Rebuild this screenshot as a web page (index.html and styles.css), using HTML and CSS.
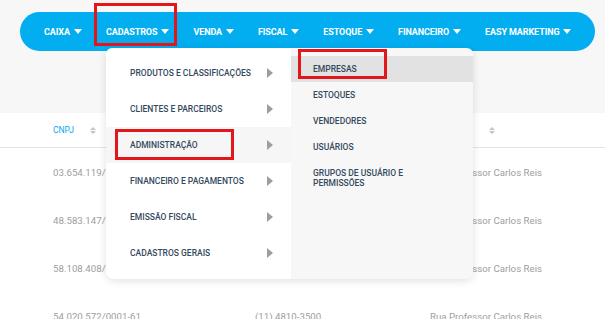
FILE: index.html
```html
<!DOCTYPE html>
<html lang="pt-BR">
<head>
    <meta charset="UTF-8">
    <title>Cadastros</title>
    <link rel="stylesheet" href="styles.css">
</head>
<body>
    <div class="header">
        <nav class="navbar">
            <span class="nav-item">CAIXA <i class="caret"></i></span>
            <span class="nav-item">CADASTROS <i class="caret"></i></span>
            <span class="nav-item">VENDA <i class="caret"></i></span>
            <span class="nav-item">FISCAL <i class="caret"></i></span>
            <span class="nav-item">ESTOQUE <i class="caret"></i></span>
            <span class="nav-item">FINANCEIRO <i class="caret"></i></span>
            <span class="nav-item">EASY MARKETING <i class="caret"></i></span>
        </nav>
    </div>

    <div class="table">
        <div class="row head">
            <span class="th">CNPJ <i class="sort"></i></span>
            <span class="th">TELEFONE <i class="sort"></i></span>
            <span class="th">ENDEREÇO <i class="sort"></i></span>
        </div>
        <div class="row">
            <span>03.654.119/0001-76</span>
            <span>(11) 4810-3500</span>
            <span>Rua Professor Carlos Reis</span>
        </div>
        <div class="row">
            <span>48.583.147/0001-10</span>
            <span>(11) 4810-3500</span>
            <span>Rua Professor Carlos Reis</span>
        </div>
        <div class="row">
            <span>58.108.408/0001-32</span>
            <span>(11) 4810-3500</span>
            <span>Rua Professor Carlos Reis</span>
        </div>
        <div class="row">
            <span>54.020.572/0001-61</span>
            <span>(11) 4810-3500</span>
            <span>Rua Professor Carlos Reis</span>
        </div>
    </div>

    <!-- dropdown of CADASTROS -->
    <div class="dropdown">
        <ul class="menu">
            <li>PRODUTOS E CLASSIFICAÇÕES <i class="arrow"></i></li>
            <li>CLIENTES E PARCEIROS <i class="arrow"></i></li>
            <li class="active">ADMINISTRAÇÃO <i class="arrow"></i></li>
            <li>FINANCEIRO E PAGAMENTOS <i class="arrow"></i></li>
            <li>EMISSÃO FISCAL <i class="arrow"></i></li>
            <li>CADASTROS GERAIS <i class="arrow"></i></li>
        </ul>
        <ul class="submenu">
            <li class="active">EMPRESAS</li>
            <li>ESTOQUES</li>
            <li>VENDEDORES</li>
            <li>USUÁRIOS</li>
            <li class="wrap">GRUPOS DE USUÁRIO E PERMISSÕES</li>
        </ul>
    </div>

    <!-- red highlight boxes -->
    <div class="mark mark-nav"></div>
    <div class="mark mark-admin"></div>
    <div class="mark mark-empresas"></div>
</body>
</html>
```

FILE: styles.css
```css
body {
    margin: 0;
    font-family: Roboto, "Liberation Sans", sans-serif;
    background-color: #fff;
    width: 605px;
    height: 319px;
    overflow: hidden;
    position: relative;
}

.header {
    background-color: #f7f7f7;
    height: 113px;
    padding: 12px 10px 0 20px;
    box-sizing: border-box;
}

.navbar {
    display: flex;
    align-items: center;
    gap: 24px;
    height: 39px;
    padding: 0 24px;
    background-color: #03aef0;
    border-radius: 20px;
}

.nav-item {
    display: flex;
    align-items: center;
    gap: 4px;
    color: #fff;
    font-size: 9px;
    font-weight: 700;
    letter-spacing: -0.1px;
    white-space: nowrap;
}

.caret {
    width: 0;
    height: 0;
    border-left: 4px solid transparent;
    border-right: 4px solid transparent;
    border-top: 5px solid #fff;
}

/* table */
.table {
    font-size: 9.7px;
    color: #9e9e9e;
}

.row {
    display: grid;
    grid-template-columns: 202px 175px 1fr;
    align-items: center;
    height: 48px;
    padding-left: 53px;
    white-space: nowrap;
}

.row.head {
    height: 34px;
    border-bottom: 1px solid #e4e4e4;
}

.th {
    display: flex;
    align-items: center;
    gap: 16px;
    color: #03a9f4;
    font-size: 8.5px;
}

.sort {
    width: 0;
    height: 0;
    border-left: 3px solid transparent;
    border-right: 3px solid transparent;
    border-bottom: 3px solid #c4c4c4;
    position: relative;
    top: -2px;
}

.sort::after {
    content: "";
    position: absolute;
    left: -3px;
    top: 4px;
    border-left: 3px solid transparent;
    border-right: 3px solid transparent;
    border-top: 3px solid #c4c4c4;
}

/* dropdown */
.dropdown {
    position: absolute;
    left: 106px;
    top: 48px;
    display: flex;
    border-radius: 6px 6px 8px 8px;
    box-shadow: 0 2px 8px rgba(0, 0, 0, 0.12);
}

.menu,
.submenu {
    list-style: none;
    margin: 0;
    color: #34495e;
    font-weight: 500;
    font-size: 8.5px;
}

.menu {
    width: 185px;
    padding: 7px 0 8px;
    background-color: #fff;
    border-radius: 6px 0 0 8px;
}

.menu li {
    display: flex;
    align-items: center;
    justify-content: space-between;
    height: 36px;
    padding: 0 18px 0 24px;
}

.menu li.active {
    background-color: #f6f6f6;
}

.arrow {
    width: 0;
    height: 0;
    border-top: 5px solid transparent;
    border-bottom: 5px solid transparent;
    border-left: 6px solid #9e9e9e;
}

.submenu {
    width: 182px;
    padding: 8px 0 0;
    background-color: #f7f7f7;
    border-radius: 0 6px 8px 0;
}

.submenu li {
    height: 26px;
    line-height: 26px;
    padding-left: 22px;
}

.submenu li.active {
    background-color: #e2e2e2;
}

.submenu li.wrap {
    height: auto;
    line-height: 10px;
    padding-top: 8px;
    width: 100px;
}

/* annotation boxes */
.mark {
    position: absolute;
    border: 3px solid #e3161b;
    box-sizing: border-box;
}

.mark-nav {
    left: 94px;
    top: 3px;
    width: 83px;
    height: 43px;
}

.mark-admin {
    left: 115px;
    top: 129px;
    width: 119px;
    height: 31px;
}

.mark-empresas {
    left: 298px;
    top: 49px;
    width: 89px;
    height: 30px;
}
```
